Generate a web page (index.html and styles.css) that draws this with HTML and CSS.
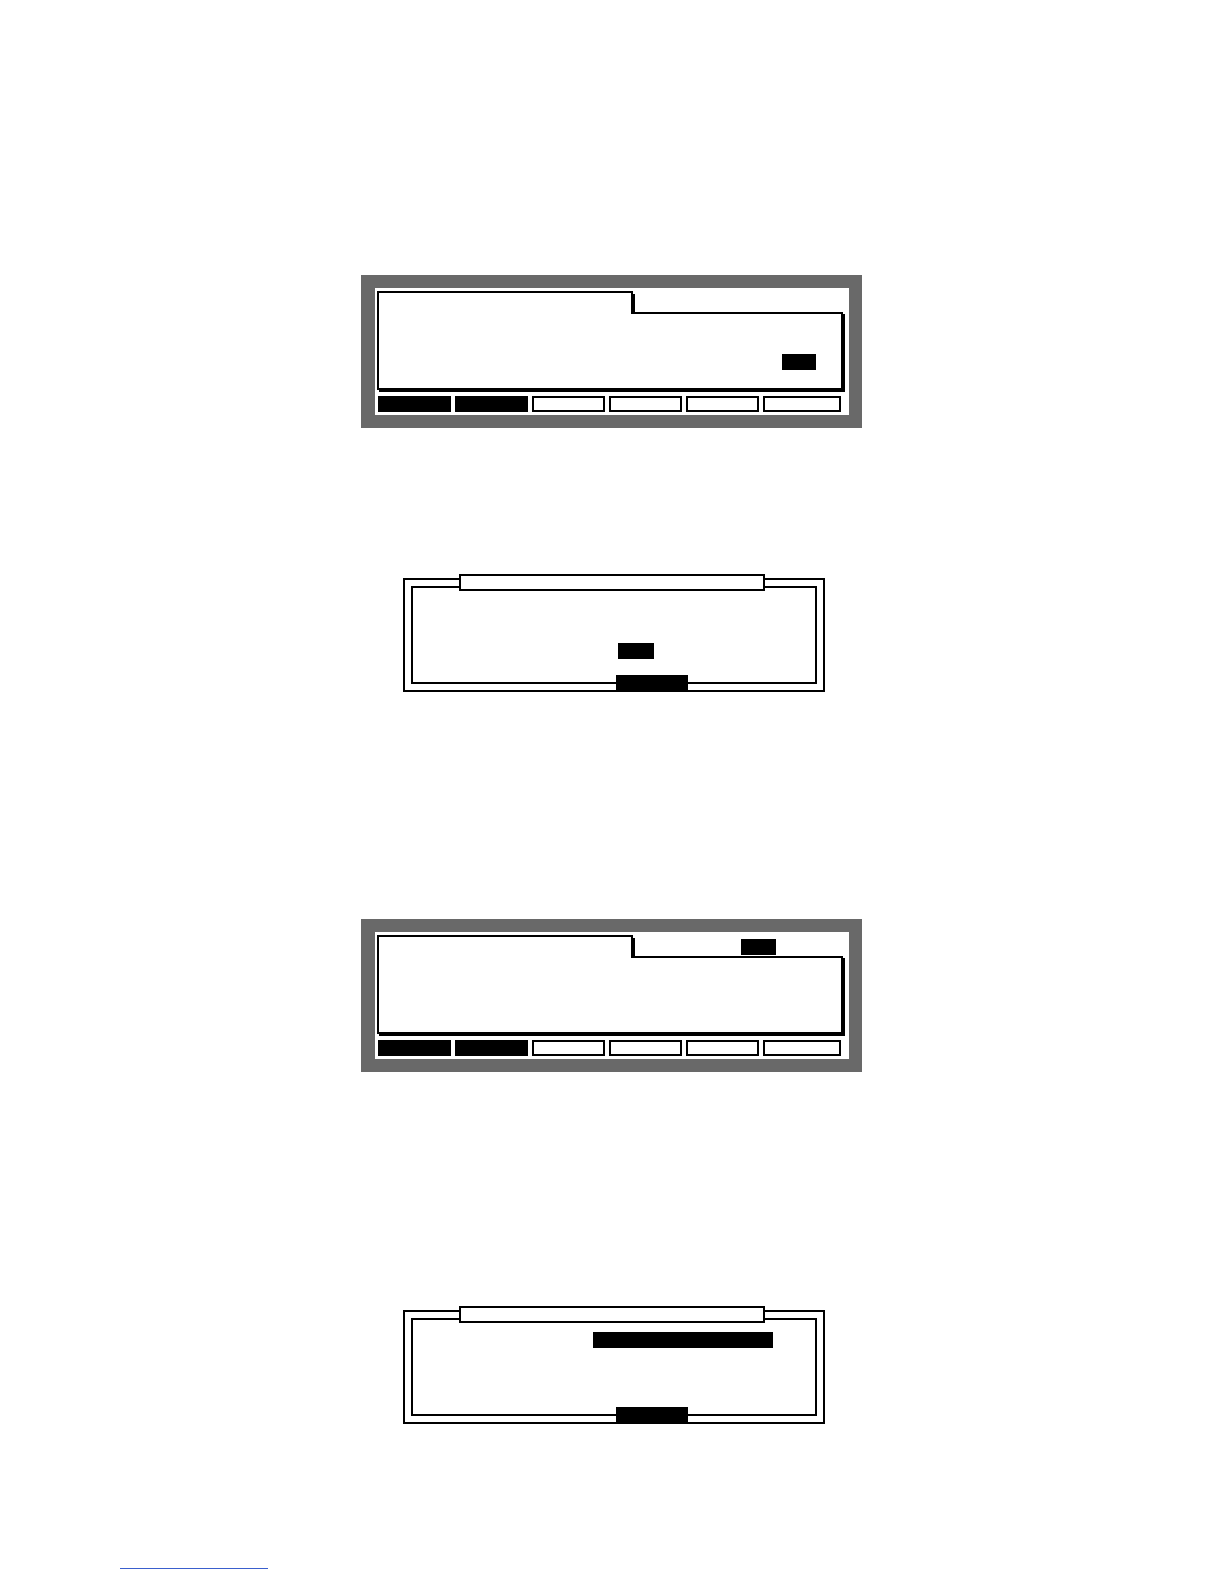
FILE: index.html
```html
<!DOCTYPE html>
<html lang="en">
<head>
<meta charset="utf-8">
<title>Display screens</title>
<link rel="stylesheet" href="styles.css">
</head>
<body>
<div class="page">

  <div class="lcd lcd-first">
    <div class="lcd-inner">
      <div class="panel">
        <div class="panel-top">
          <div class="tab"></div>
          <div class="tab-rest"></div>
        </div>
        <div class="panel-body">
          <div class="field field-value"></div>
        </div>
      </div>
      <div class="softkeys">
        <div class="key key-on"></div>
        <div class="key key-on"></div>
        <div class="key"></div>
        <div class="key"></div>
        <div class="key"></div>
        <div class="key key-wide"></div>
      </div>
    </div>
  </div>

  <div class="dialog dialog-first">
    <div class="dialog-title"></div>
    <div class="dialog-outer">
      <div class="dialog-inner dialog-inner-a">
        <div class="field field-small"></div>
      </div>
    </div>
    <div class="dialog-button"></div>
  </div>

  <div class="lcd lcd-second">
    <div class="lcd-inner">
      <div class="panel">
        <div class="panel-top">
          <div class="tab"></div>
          <div class="tab-rest tab-rest-field">
            <div class="field field-status"></div>
          </div>
        </div>
        <div class="panel-body"></div>
      </div>
      <div class="softkeys">
        <div class="key key-on"></div>
        <div class="key key-on"></div>
        <div class="key"></div>
        <div class="key"></div>
        <div class="key"></div>
        <div class="key key-wide"></div>
      </div>
    </div>
  </div>

  <div class="dialog dialog-second">
    <div class="dialog-title"></div>
    <div class="dialog-outer">
      <div class="dialog-inner dialog-inner-b">
        <div class="field field-bar"></div>
      </div>
    </div>
    <div class="dialog-button"></div>
  </div>

  <div class="footnote-rule"></div>
</div>
</body>
</html>
```

FILE: styles.css
```css
html, body {
  margin: 0;
  padding: 0;
  background: #ffffff;
  font-family: "Liberation Sans", Arial, sans-serif;
}

.page {
  width: 1224px;
  height: 1584px;
  display: flex;
  flex-direction: column;
  align-items: flex-start;
  overflow: hidden;
}

/* ---------- LCD screen ---------- */
.lcd {
  box-sizing: border-box;
  width: 501px;
  height: 153px;
  margin-left: 361px;
  padding: 13px 13px 13px 14px;
  background: #696969;
}
.lcd-first { margin-top: 275px; }
.lcd-second { margin-top: 227px; }

.lcd-inner {
  box-sizing: border-box;
  height: 127px;
  background: #ffffff;
  padding: 3px 0 0 2px;
  display: flex;
  flex-direction: column;
}

.panel {
  width: 466px;
  display: flex;
  flex-direction: column;
}

.panel-top {
  display: flex;
  height: 21px;
}

.tab {
  position: relative;
  box-sizing: border-box;
  width: 256px;
  height: 21px;
  border: 2px solid #000;
  border-bottom: none;
  background: #fff;
}
.tab::after {
  content: "";
  position: absolute;
  right: -4px;
  top: 1px;
  width: 2px;
  bottom: 0;
  background: #000;
}

.tab-rest { flex: 1; }
.tab-rest-field {
  padding: 4px 0 0 108px;
}

.panel-body {
  position: relative;
  box-sizing: border-box;
  height: 78px;
  border: 2px solid #000;
  border-top: none;
  box-shadow: 2px 2px 0 #000;
  padding: 42px 0 0 403px;
}
.panel-body::before {
  content: "";
  position: absolute;
  top: 0;
  left: 252px;
  right: 0;
  height: 2px;
  background: #000;
}

.field {
  background: #000;
  height: 16px;
}
.field-value { width: 34px; }
.field-status { width: 35px; }
.field-small { width: 36px; }
.field-bar { width: 180px; }

.softkeys {
  display: flex;
  gap: 4px;
  margin-top: 6px;
  margin-left: 1px;
}
.key {
  box-sizing: border-box;
  width: 73px;
  height: 16px;
  border: 2px solid #000;
  background: #fff;
}
.key-on { background: #000; }
.key-wide { width: 78px; }

/* ---------- Dialog ---------- */
.dialog {
  position: relative;
  width: 422px;
  margin-left: 403px;
  padding-top: 4px;
}
.dialog-first { margin-top: 146px; }
.dialog-second { margin-top: 234px; }

.dialog-outer {
  box-sizing: border-box;
  height: 114px;
  border: 2px solid #000;
  padding: 6px;
}
.dialog-inner {
  box-sizing: border-box;
  height: 98px;
  border: 2px solid #000;
}
.dialog-inner-a { padding: 55px 0 0 205px; }
.dialog-inner-b { padding: 12px 0 0 180px; }

.dialog-title {
  position: absolute;
  top: 0;
  left: 56px;
  box-sizing: border-box;
  width: 306px;
  height: 17px;
  border: 2px solid #000;
  background: #fff;
}

.dialog-button {
  position: absolute;
  left: 213px;
  bottom: 0;
  width: 72px;
  height: 17px;
  background: #000;
}

.footnote-rule {
  margin-top: 144px;
  margin-left: 120px;
  width: 148px;
  height: 1px;
  background: #3a5fcd;
}
```
